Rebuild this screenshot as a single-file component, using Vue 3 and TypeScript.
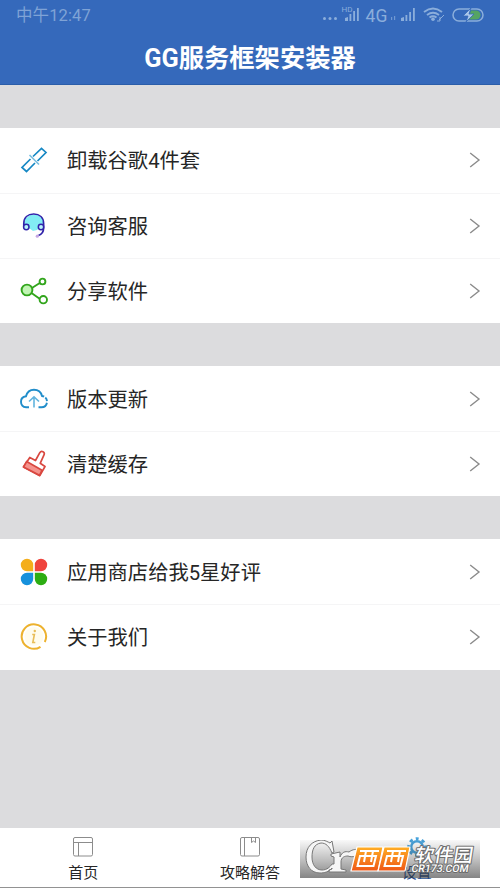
<script setup lang="ts">
interface Item { icon: string; label: string }
const groups: Item[][] = [
  [
    { icon: 'link', label: '卸载谷歌4件套' },
    { icon: 'headset', label: '咨询客服' },
    { icon: 'share', label: '分享软件' },
  ],
  [
    { icon: 'cloud', label: '版本更新' },
    { icon: 'brush', label: '清楚缓存' },
  ],
  [
    { icon: 'petals', label: '应用商店给我5星好评' },
    { icon: 'info', label: '关于我们' },
  ],
]
</script>

<template>
  <div class="screen">
    <header class="header">
      <div class="status">
        <span class="time">中午12:47</span>
        <svg class="indicators" width="166" height="24" viewBox="0 0 166 24">
          <g fill="#8baedb">
            <circle cx="4.500" cy="18.500" r="1.500" /><circle cx="10" cy="18.500" r="1.500" /><circle cx="15.500" cy="18.500" r="1.500" />
            <text x="21.500" y="12" font-size="7" textLength="11" lengthAdjust="spacingAndGlyphs">HD</text>
            <path d="M25 21v-3l3-1v4zM29.500 21v-7h1.800v7zM33.200 21V11h1.800v10zM37 21V8h1.800v13z" />
            <text x="45.500" y="21.500" font-size="17.500" textLength="22">4G</text>
            <path d="M71 20v-3h1.200v3zM74 20v-4h1.200v4z" opacity=".7" />
            <path d="M81 21v-3l3-1v4zM85.500 21v-6h1.800v6zM89.200 21V12h1.800v9zM93 21V8h1.800v13z" />
            <circle cx="113" cy="19.200" r="1.800" />
          </g>
          <g fill="none" stroke="#8baedb" stroke-width="1.900">
            <path d="M104 12q9-7 18 0M107 15q6-4.500 12 0M109.500 17.500q3.500-2.500 7 0" />
            <path d="M119 20l5-5M120 17v4h-3" stroke-width="1" />
            <rect x="133" y="9" width="30" height="12" rx="6" stroke-width="1.500" />
          </g>
          <path d="M151 10.500h5a4.500 4.500 0 0 1 0 9h-8z" fill="#55a464" />
          <path d="M151 8l-8 8h5l-2 6 8-8h-5z" fill="#a9c6ea" stroke="#3568b9" stroke-width=".8" />
        </svg>
      </div>
      <h1>GG服务框架安装器</h1>
    </header>

    <main>
      <section v-for="(group, g) in groups" :key="g" class="group">
        <div v-for="item in group" :key="item.icon" class="row">
          <svg class="icon" width="28" height="28" viewBox="0 0 28 28" fill="none">
            <g v-if="item.icon === 'link'" stroke-width="1.700">
              <path d="M13 10.500L21.500 2.300 26 6.500 17.500 15M10.500 13L2 21.500 6.500 25.500 15 17" stroke="#1688c4" />
              <path d="M9.500 9L19 18.500" stroke="#79bedf" stroke-width="1.600" />
            </g>
            <g v-else-if="item.icon === 'headset'">
              <path d="M4 12l1-5 5-4h8l5 4 1 5-7 6-4 1-4-3z" fill="#82edf4" />
              <path d="M3.800 15V11.500C3.800 5.500 7.800 2 13.700 2s9.900 3.500 9.900 9.500V16c0 4-2 6.500-5.200 7.500" stroke="#3023aa" stroke-width="1.700" />
              <circle cx="6.300" cy="15" r="2.700" fill="#baf4fa" stroke="#3023aa" stroke-width="1.500" />
              <circle cx="21" cy="15" r="2.700" fill="#baf4fa" stroke="#3023aa" stroke-width="1.500" />
              <circle cx="17.300" cy="24.200" r="1.600" fill="#c6a7e5" />
            </g>
            <g v-else-if="item.icon === 'share'" stroke="#32a51c" stroke-width="1.900">
              <path d="M11.500 11.300L19.800 6M11.500 16l8.500 6" />
              <circle cx="7" cy="13" r="5.400" fill="#c1f5b4" />
              <circle cx="22.500" cy="4.500" r="2.900" /><circle cx="23.300" cy="22.700" r="3.700" />
            </g>
            <g v-else-if="item.icon === 'cloud'">
              <path d="M9 22.300H6.200C3 22 1 20 1 16.700c0-3 2-5 5-5.400C7 7.500 10 4.800 14 4.800s7 2.500 8 6.200c3 .5 5 2.600 5 5.500 0 3.300-2 5.800-5.500 5.800H18.500" stroke="#218dca" stroke-width="1.900" stroke-dasharray="43 1.500 4 1.500 20" />
              <path d="M14 22.500V11.800M9 16.500l5-4.700 5 4.700" stroke="#61b4de" stroke-width="1.600" />
            </g>
            <g v-else-if="item.icon === 'brush'" stroke="#d94840" stroke-width="1.700" stroke-linejoin="round">
              <path d="M9.800 7.500l5.700 3 4.300-7.800c1.600-2.500 5.500-.5 4.200 2.200l-3.800 8.400 4.800 3.200-5.200 9.200L3.500 17z" fill="#fff" />
              <path d="M6.700 11.500l15.300 8.800-2.500 5L3.500 17z" fill="#f5928c" />
            </g>
            <g v-else-if="item.icon === 'petals'">
              <path d="M13.200 13.200H7A6.200 6.200 0 1 1 13.200 7z" fill="#f4ae1a" />
              <path d="M14.800 13.200V7a6.200 6.200 0 1 1 6.200 6.200z" fill="#ef443d" />
              <path d="M13.200 14.800V21A6.200 6.200 0 1 1 7 14.800z" fill="#1691dc" />
              <path d="M14.800 14.800H21a6.200 6.200 0 1 1-6.200 6.200z" fill="#2dad12" />
            </g>
            <g v-else>
              <circle cx="14" cy="13.500" r="9.500" fill="#fffced" />
              <path d="M20.500 23.800A12.200 12.200 0 1 1 24.800 19" stroke="#edb22e" stroke-width="2" />
              <path d="M12.200 11.500h2.200L12.800 19.500h2.500" stroke="#e8bd58" stroke-width="1.600" />
              <circle cx="14.800" cy="8" r="1.200" fill="#e8bd58" />
            </g>
          </svg>
          <span class="label">{{ item.label }}</span>
          <svg class="chevron" width="12" height="18" viewBox="0 0 12 18"><path d="M1.200 2L10 9 1.200 16" fill="none" stroke="#8b8b8b" stroke-width="1.400" /></svg>
        </div>
      </section>
    </main>

    <nav class="tabs">
      <div class="tab">
        <svg width="22" height="22" viewBox="0 0 22 22" fill="none" stroke="#8c8c8c"><rect x="1.500" y="1.500" width="19" height="18.500" rx="1.500" /><path d="M2 6.500h18M6.500 7v13" /></svg>
        <span>首页</span>
      </div>
      <div class="tab">
        <svg width="22" height="22" viewBox="0 0 22 22" fill="none" stroke="#8c8c8c"><rect x="1.500" y="1.500" width="19" height="18.500" rx="1.500" /><path d="M5.500 2v18M12.500 2v4.500l2-1.500 2 1.500V2" /></svg>
        <span>攻略解答</span>
      </div>
      <div class="tab active">
        <svg width="22" height="22" viewBox="0 0 22 22" fill="none" stroke="#48a3dc"><circle cx="11" cy="11" r="5.800" stroke-width="2.500" /><circle cx="11" cy="11" r="8.300" stroke-width="3" stroke-dasharray="3.260 3.260" stroke-dashoffset="1.600" transform="rotate(-90 11 11)" /></svg>
        <span>设置</span>
      </div>
      <svg class="watermark" width="180" height="38" viewBox="0 0 180 38">
        <defs>
          <linearGradient id="shade" x1="0" y1="0" x2="0" y2="1"><stop offset="0" stop-color="#333" stop-opacity=".03" /><stop offset=".5" stop-color="#333" stop-opacity=".3" /><stop offset="1" stop-color="#333" stop-opacity=".6" /></linearGradient>
          <linearGradient id="orange" x1="0" y1="0" x2="0" y2="1"><stop offset="0" stop-color="#ffae24" /><stop offset="1" stop-color="#ef5716" /></linearGradient>
        </defs>
        <rect width="180" height="38" fill="url(#shade)" />
        <path d="M32 1l2 11-2 1C29 6 26 3 21 3 14 4 12 10 12 17c0 8 4 13 10 13 5 0 8-3 10-6h2V17l-3-1v-2l9-2v5c2-5 5-6 9-5 4-3 7-3 13-2-3 6-9 8-14 6-3 0-7 1-7 6v7l5 1v2H29v-2l3-1v-1c-3 4-8 5-12 5C11 33 6 26 6 17 6 7 12 1 21 0c4 0 7 2 9 3z" fill="#f6f6f6" stroke="#777" stroke-width="1" stroke-linejoin="round" />
        <g stroke="#fff" stroke-width="1.200" stroke-linejoin="round">
          <path d="M57 7h26l-5 24H51z" fill="url(#orange)" /><path d="M84 7h26l-5 24H78z" fill="url(#orange)" />
        </g>
        <g fill="none" stroke="#fff" stroke-width="2">
          <path d="M60 11h19M60 16h16l-2.500 10H57.500zM66 11l-2 11M73 11l-2 11" />
          <path d="M87 11h19M87 16h16l-2.500 10H84.500zM93 11l-2 11M100 11l-2 11" />
        </g>
        <g stroke="#6c6c6c" stroke-width="2" stroke-linejoin="round" paint-order="stroke" font-weight="700" fill="#fff">
          <text transform="translate(114 21.500) skewX(-9)" font-size="19" font-weight="500" textLength="58" lengthAdjust="spacingAndGlyphs">软件园</text>
          <text transform="translate(111 32) skewX(-10)" font-size="10.500" font-weight="500" textLength="57" lengthAdjust="spacingAndGlyphs">CR173.COM</text>
        </g>
      </svg>
    </nav>
  </div>
</template>

<style>
body { margin: 0; }
</style>

<style scoped>
.screen {
  width: 500px;
  height: 888px;
  display: flex;
  flex-direction: column;
  overflow: hidden;
  background: #dcdcde;
  color: #262626;
  font-family: Roboto, "Noto Sans CJK SC", sans-serif;
}
.header {
  height: 85px;
  flex: none;
  box-sizing: border-box;
  background: #3569bb;
  border-bottom: 1px solid #2b5da9;
}
.status {
  height: 30px;
  display: flex;
  justify-content: space-between;
  padding: 0 14px 0 16px;
  color: #7fa3d6;
}
.time { font-size: 16.500px; line-height: 32px; letter-spacing: .1px; }
.indicators { flex: none; }
h1 {
  margin: 0;
  color: #fff;
  text-align: center;
  font-size: 25.300px;
  line-height: 58px;
  font-weight: 700;
}
main {
  flex: 1;
  display: flex;
  flex-direction: column;
  gap: 42.500px;
  padding-top: 42.500px;
}
.group { background: #fff; }
.row {
  height: 65.300px;
  box-sizing: border-box;
  display: flex;
  align-items: center;
  padding: 0 19px 0 20px;
}
.row + .row { border-top: 1px solid #f5f5f6; }
.label { flex: 1; margin-left: 19px; padding-top: 2px; font-size: 20.300px; line-height: 30px; }
.tabs {
  position: relative;
  height: 60px;
  flex: none;
  box-sizing: border-box;
  display: flex;
  background: #fff;
  border-bottom: 1.500px solid #929292;
}
.tab {
  flex: 1;
  display: flex;
  flex-direction: column;
  align-items: center;
  padding-top: 8px;
  font-size: 15px;
  line-height: 20px;
}
.tab span { margin-top: 5px; }
.active { color: #254e94; }
.watermark { position: absolute; left: 300px; top: 12px; }
</style>
